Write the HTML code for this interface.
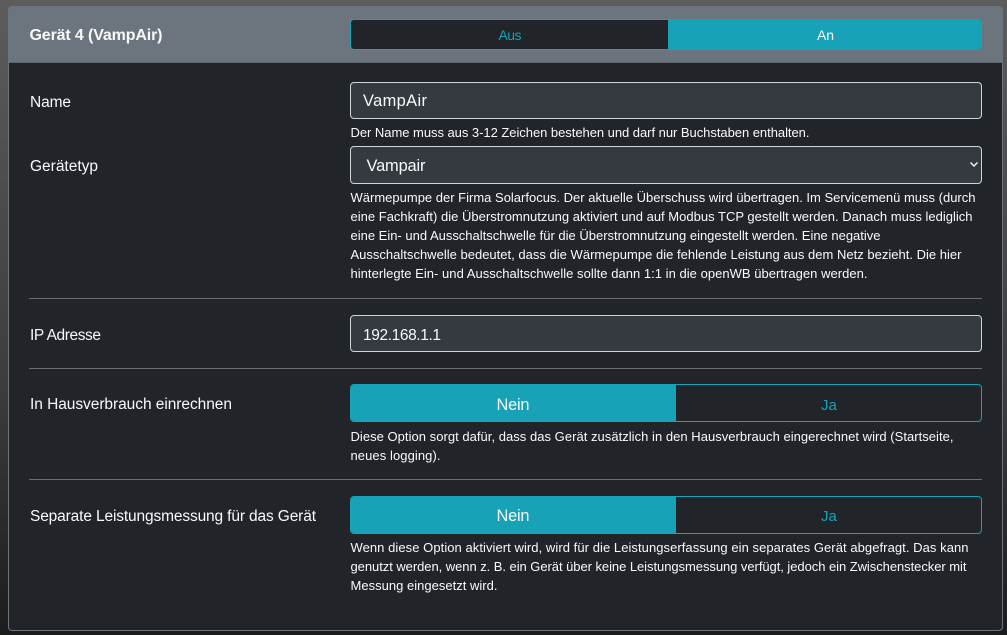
<!DOCTYPE html>
<html lang="de"><head><meta charset="utf-8"><title>Gerät 4</title>
<style>
html,body{margin:0;padding:0;width:1007px;height:635px;overflow:hidden;background:linear-gradient(to bottom,#5c5c5c 0,#3d3d3d 60%,#1c1c1c 100%);}
.a{position:absolute;box-sizing:border-box}
.card{left:8px;top:6px;width:995px;height:625px;background:#212529;border:1px solid #6c757d;border-radius:4px;overflow:hidden}
.head{left:9px;top:7px;width:993px;height:56px;background:#6c757d;border-bottom:1px solid #5f676e}
.hr{left:29px;width:953px;height:1px;background:#6a6e73}
.inp{left:350px;width:632px;background:#343a40;border:1px solid #ced4da;border-radius:4px}
.t{left:350px;width:632px;border:1px solid #17a2b8;border-radius:4px;overflow:hidden;background:#212529}
.on{position:absolute;top:-1px;bottom:-1px;background:#17a2b8}
svg{position:absolute;left:0;top:0}
text{font-family:"Liberation Sans",sans-serif;fill:#f8f9fa}
.s{font-size:13px}.m{font-size:15.5px}.v{font-size:16.4px}.c{fill:#17a2b8;font-size:14px}.j{fill:#17a2b8;font-size:15px}.w{font-size:14px}
</style></head><body>
<div class="a card"></div>
<div class="a head"></div>
<div class="a t" style="top:19px;height:31px"><div class="on" style="left:317px;right:-1px"></div></div>
<div class="a inp" style="top:82px;height:37px"></div>
<div class="a inp" style="top:146px;height:38px"></div>
<div class="a hr" style="top:298px"></div>
<div class="a inp" style="top:315px;height:37px"></div>
<div class="a hr" style="top:368px"></div>
<div class="a t" style="top:384px;height:38px"><div class="on" style="left:-1px;width:326px"></div></div>
<div class="a hr" style="top:479px"></div>
<div class="a t" style="top:496px;height:38px"><div class="on" style="left:-1px;width:326px"></div></div>
<svg width="1007" height="635" viewBox="0 0 1007 635">
<path d="M970.500 162.500l3.500 3.500 3.500-3.500" fill="none" stroke="#f0f0f0" stroke-width="1.500"/>
<text x="29.500" y="40" font-size="16" font-weight="700" textLength="133">Gerät 4 (VampAir)</text>
<text x="498.500" y="40" class="c" textLength="23">Aus</text>
<text x="817" y="40" class="w" textLength="17">An</text>
<text x="30" y="107" class="m" textLength="41">Name</text>
<text x="363" y="106" class="v" textLength="64">VampAir</text>
<text x="350.500" y="137" class="s" textLength="459">Der Name muss aus 3-12 Zeichen bestehen und darf nur Buchstaben enthalten.</text>
<text x="30" y="171" class="m" textLength="68">Gerätetyp</text>
<text x="366.500" y="171" class="v" textLength="59">Vampair</text>
<text x="350.500" y="202" class="s" textLength="625">Wärmepumpe der Firma Solarfocus. Der aktuelle Überschuss wird übertragen. Im Servicemenü muss (durch</text>
<text x="350.500" y="221" class="s" textLength="622">eine Fachkraft) die Überstromnutzung aktiviert und auf Modbus TCP gestellt werden. Danach muss lediglich</text>
<text x="350.500" y="240" class="s" textLength="530">eine Ein- und Ausschaltschwelle für die Überstromnutzung eingestellt werden. Eine negative</text>
<text x="350.500" y="259" class="s" textLength="611">Ausschaltschwelle bedeutet, dass die Wärmepumpe die fehlende Leistung aus dem Netz bezieht. Die hier</text>
<text x="350.500" y="278" class="s" textLength="517">hinterlegte Ein- und Ausschaltschwelle sollte dann 1:1 in die openWB übertragen werden.</text>
<text x="30" y="340" class="m" textLength="71">IP Adresse</text>
<text x="363" y="340" class="m" textLength="78">192.168.1.1</text>
<text x="30" y="409" class="m" textLength="202">In Hausverbrauch einrechnen</text>
<text x="496.500" y="410" class="v" textLength="33">Nein</text>
<text x="821" y="410" class="j">Ja</text>
<text x="350.500" y="441" class="s" textLength="603">Diese Option sorgt dafür, dass das Gerät zusätzlich in den Hausverbrauch eingerechnet wird (Startseite,</text>
<text x="350.500" y="460" class="s" textLength="90">neues logging).</text>
<text x="30" y="521" class="m" textLength="286">Separate Leistungsmessung für das Gerät</text>
<text x="496.500" y="521" class="v" textLength="33">Nein</text>
<text x="821" y="521" class="j">Ja</text>
<text x="350.500" y="552" class="s" textLength="618">Wenn diese Option aktiviert wird, wird für die Leistungserfassung ein separates Gerät abgefragt. Das kann</text>
<text x="350.500" y="571" class="s" textLength="616">genutzt werden, wenn z. B. ein Gerät über keine Leistungsmessung verfügt, jedoch ein Zwischenstecker mit</text>
<text x="350.500" y="590" class="s" textLength="147">Messung eingesetzt wird.</text>
</svg>
</body></html>
